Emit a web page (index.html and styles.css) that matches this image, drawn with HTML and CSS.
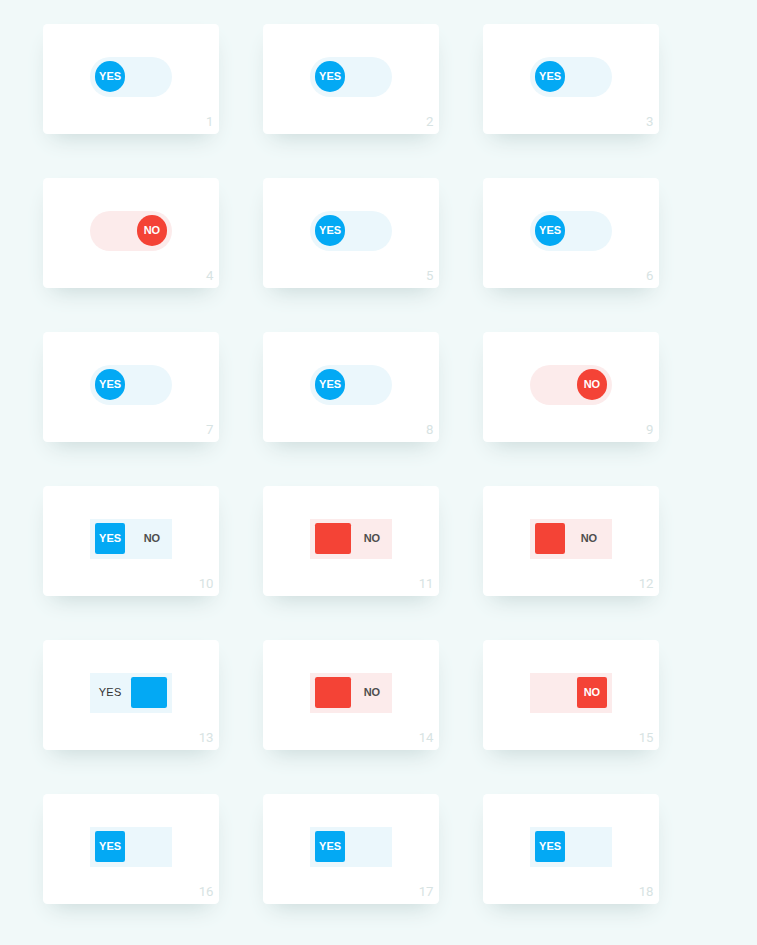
FILE: index.html
```html
<!DOCTYPE html>
<html>
<head>
<meta charset="utf-8">
<link rel="stylesheet" href="styles.css">
</head>
<body>
<div class="grid">
  <div class="cell"><div class="card"><div class="toggle round blue"><span class="knob circle blue-k">YES</span></div><span class="num">1</span></div></div>
  <div class="cell"><div class="card"><div class="toggle round blue"><span class="knob circle blue-k">YES</span></div><span class="num">2</span></div></div>
  <div class="cell"><div class="card"><div class="toggle round blue"><span class="knob circle blue-k">YES</span></div><span class="num">3</span></div></div>

  <div class="cell"><div class="card"><div class="toggle round pink end"><span class="knob circle red-k">NO</span></div><span class="num">4</span></div></div>
  <div class="cell"><div class="card"><div class="toggle round blue"><span class="knob circle blue-k">YES</span></div><span class="num">5</span></div></div>
  <div class="cell"><div class="card"><div class="toggle round blue"><span class="knob circle blue-k">YES</span></div><span class="num">6</span></div></div>

  <div class="cell"><div class="card"><div class="toggle round blue"><span class="knob circle blue-k">YES</span></div><span class="num">7</span></div></div>
  <div class="cell"><div class="card"><div class="toggle round blue"><span class="knob circle blue-k">YES</span></div><span class="num">8</span></div></div>
  <div class="cell"><div class="card"><div class="toggle round pink end"><span class="knob circle red-k">NO</span></div><span class="num">9</span></div></div>

  <div class="cell"><div class="card"><div class="toggle blue split"><span class="knob square blue-k">YES</span><span class="label">NO</span></div><span class="num">10</span></div></div>
  <div class="cell"><div class="card"><div class="toggle pink split"><span class="knob square wide red-k"></span><span class="label">NO</span></div><span class="num">11</span></div></div>
  <div class="cell"><div class="card"><div class="toggle pink split"><span class="knob square red-k"></span><span class="label inset">NO</span></div><span class="num">12</span></div></div>

  <div class="cell"><div class="card"><div class="toggle blue split"><span class="label light">YES</span><span class="knob square wide blue-k"></span></div><span class="num">13</span></div></div>
  <div class="cell"><div class="card"><div class="toggle pink split"><span class="knob square wide red-k"></span><span class="label">NO</span></div><span class="num">14</span></div></div>
  <div class="cell"><div class="card"><div class="toggle pink end"><span class="knob square red-k">NO</span></div><span class="num">15</span></div></div>

  <div class="cell"><div class="card"><div class="toggle blue"><span class="knob square blue-k">YES</span></div><span class="num">16</span></div></div>
  <div class="cell"><div class="card"><div class="toggle blue"><span class="knob square blue-k">YES</span></div><span class="num">17</span></div></div>
  <div class="cell"><div class="card"><div class="toggle blue"><span class="knob square blue-k">YES</span></div><span class="num">18</span></div></div>
</div>
</body>
</html>
```
FILE: styles.css
```css
html, body {
  margin: 0;
  padding: 0;
}
body {
  background: #f1f9f9;
  font-family: "Liberation Sans", Arial, sans-serif;
  min-height: 945px;
}
.grid {
  display: grid;
  grid-template-columns: repeat(3, 220px);
  padding: 2px 0 0 21px;
}
.cell {
  padding: 22px;
  height: 154px;
  box-sizing: border-box;
}
.card {
  position: relative;
  height: 110px;
  background: #fff;
  border-radius: 4.4px;
  box-shadow: 0 11px 22px -9px #c5d6d6;
  display: flex;
  justify-content: center;
  align-items: flex-start;
}
.toggle {
  margin-top: 33px;
  width: 81.4px;
  height: 39.6px;
  box-sizing: border-box;
  padding: 4.4px;
  display: flex;
  align-items: center;
}
.toggle.round { border-radius: 100px; }
.toggle.blue { background: #ebf7fc; }
.toggle.pink { background: #fcebeb; }
.toggle.end { justify-content: flex-end; }
.toggle.split { justify-content: space-between; }
.knob {
  width: 30.8px;
  height: 30.8px;
  flex: none;
  display: flex;
  align-items: center;
  justify-content: center;
  color: #fff;
  font-size: 11px;
  font-weight: bold;
  line-height: 1;
}
.knob.circle { border-radius: 50%; }
.knob.square { border-radius: 2.2px; }
.knob.wide { width: 36px; }
.blue-k { background: #03a9f4; }
.red-k { background: #f44336; }
.label {
  width: 30.8px;
  text-align: center;
  color: #4e4e4e;
  font-size: 11px;
  font-weight: bold;
  line-height: 1;
}
.label.inset { margin-right: 3px; }
.label.light {
  font-weight: normal;
  color: #333;
  letter-spacing: 0.3px;
}
.num {
  position: absolute;
  right: 0;
  bottom: 0;
  padding: 5.5px;
  color: #d7e3e3;
  font-family: Roboto, "Liberation Sans", sans-serif;
  font-size: 13.2px;
  line-height: 1;
}
```
